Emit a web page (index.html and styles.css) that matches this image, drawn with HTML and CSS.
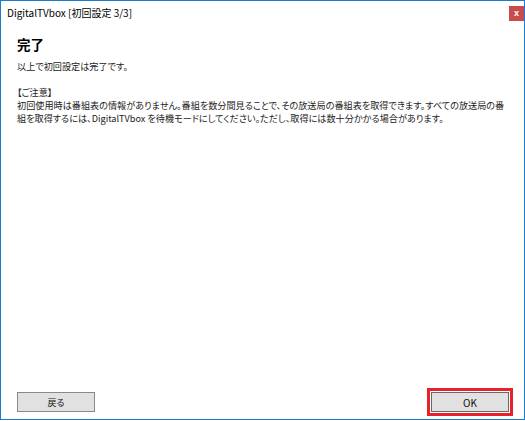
FILE: index.html
```html
<!DOCTYPE html>
<html>
<head>
<meta http-equiv="Content-Type" content="text/html;charset=UTF-8">
<link rel="stylesheet" href="styles.css">
</head>
<body>
<div class="dialogWindow">
  <div class="titleBar">
    <span class="titleText">DigitalTVbox [初回設定 3/3]</span>
    <span class="closeButton">x</span>
  </div>
  <div class="dialogMain">
    <div class="pageTitle">完了</div>
    <p class="doneText">以上で初回設定は完了です。</p>
    <div class="noteBlock">
      <div>【ご注意】</div>
      <div>初回使用時は番組表の情報がありません。番組を数分間見ることで、その放送局の番組表を取得できます。すべての放送局の番</div>
      <div>組を取得するには、DigitalTVbox を待機モードにしてください。ただし、取得には数十分かかる場合があります。</div>
    </div>
  </div>
  <div class="dialogBottom">
    <button class="dialogButton">戻る</button>
    <span class="focusMark">
      <button class="dialogButton okButton">OK</button>
    </span>
  </div>
</div>
</body>
</html>
```

FILE: styles.css
```css
body{
  margin: 0;
  background-color: #ffffff;
  font-family: "Noto Sans CJK JP", "Noto Sans", sans-serif;
  font-feature-settings: "palt";
  color: #222222;
}
.dialogWindow{
  width: 525px;
  height: 420px;
  box-sizing: border-box;
  border: 1px solid #1b7bcc;
  display: flex;
  flex-direction: column;
}
.titleBar{
  height: 26px;
  display: flex;
  align-items: flex-start;
  justify-content: space-between;
  padding-left: 6px;
}
.titleText{
  font-size: 10px;
  line-height: 10px;
  margin-top: 7px;
  color: #000000;
}
.closeButton{
  width: 15px;
  height: 15px;
  margin-top: 5px;
  background-color: #c84c4c;
  color: #ffffff;
  font-family: "Liberation Sans", sans-serif;
  font-weight: bold;
  font-size: 9px;
  line-height: 14px;
  text-align: center;
}
.dialogMain{
  flex: 1;
  padding: 0 16px;
}
.pageTitle{
  font-size: 13.5px;
  font-weight: bold;
  line-height: 16px;
  margin-top: 9px;
  color: #000000;
}
.doneText{
  font-size: 9.15px;
  line-height: 13px;
  margin: 8px 0 0 0;
}
.noteBlock{
  font-size: 9.15px;
  line-height: 13px;
  margin-top: 13px;
  white-space: nowrap;
}
.dialogBottom{
  display: flex;
  align-items: center;
  justify-content: space-between;
  padding: 0 11px 3px 16px;
}
.dialogButton{
  width: 78px;
  height: 20px;
  margin: 0;
  padding: 0;
  background-color: #e1e1e1;
  border: 1px solid #8a8a8a;
  font-family: "Noto Sans CJK JP", "Noto Sans", sans-serif;
  font-feature-settings: "palt";
  font-size: 9px;
  color: #111111;
  display: block;
}
.okButton{
  border-color: #6a6a6a;
  font-size: 10px;
}
.focusMark{
  display: block;
  border: 3px solid #e8212a;
  padding: 1px;
}
```
